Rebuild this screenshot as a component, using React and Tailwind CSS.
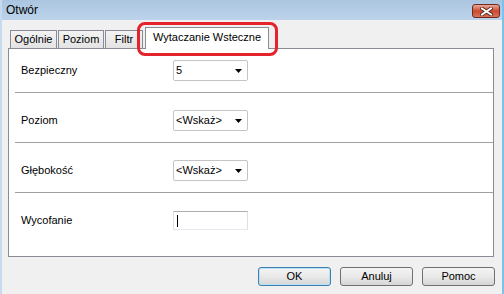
import React from 'react'

const font = { fontFamily: '"Liberation Sans", Arial, sans-serif' }

function CloseButton() {
  return (
    <div className="mt-[4px] mr-[2px] w-[28px] h-[14px] rounded-[3px] border border-[#6e2a1e] bg-gradient-to-b from-[#eaa899] via-[#c9492e] to-[#d8735a] flex items-center justify-center">
      <svg width="13" height="9" viewBox="0 0 13 9">
        <path d="M2 1.5 L11 7.5 M11 1.5 L2 7.5" stroke="#4a1a12" strokeWidth="3.6" strokeLinecap="square" />
        <path d="M2 1.5 L11 7.5 M11 1.5 L2 7.5" stroke="#ffffff" strokeWidth="2" strokeLinecap="square" />
      </svg>
    </div>
  )
}

function Tab({ label, width }) {
  return (
    <div
      className={`${width} h-[18px] mr-px border border-b-0 border-[#898c95] bg-gradient-to-b from-[#f3f3f3] to-[#e3e3e3] flex items-center justify-center text-[11px] text-black`}
    >
      {label}
    </div>
  )
}

function Dropdown({ value }) {
  return (
    <div className="w-[75px] h-[21px] border border-[#c4c4c4] rounded-[2px] bg-white flex items-center justify-between pl-[2px] pr-[5px] text-[11px] text-black">
      <span>{value}</span>
      <svg width="7" height="4" viewBox="0 0 7 4">
        <path d="M0 0 H7 L3.5 4 Z" fill="#000" />
      </svg>
    </div>
  )
}

function Row({ label, children, pt }) {
  return (
    <div className={`flex items-center pl-[12px] ${pt} pb-[11px]`}>
      <div className="w-[152px] text-[11px] text-black">{label}</div>
      {children}
    </div>
  )
}

function Separator() {
  return <div className="ml-[6px] h-px bg-[#a0a0a0]" />
}

function Button({ label, primary }) {
  return (
    <div
      className={`w-[73px] h-[19px] rounded-[3px] border flex items-center justify-center text-[11px] text-black bg-gradient-to-b from-[#f4f4f4] via-[#e9e9e9] to-[#d6d6d6] ${
        primary ? 'border-[#3c7fb1] shadow-[inset_0_0_0_1px_#b9e2f8]' : 'border-[#707070]'
      }`}
    >
      {label}
    </div>
  )
}

export default function App() {
  return (
    <div
      className="relative w-[504px] h-[294px] flex flex-col bg-[#f0f0f0] border-l-2 border-l-[#c7dbef] border-r-2 border-r-[#7cc2ec] overflow-hidden"
      style={font}
    >
      {/* Title bar */}
      <div className="h-[20px] flex justify-between bg-gradient-to-b from-[#abc5e0] to-[#bcd3ea]">
        <span className="pl-[4px] pt-[3px] text-[12px] leading-[14px] text-black">Otwór</span>
        <CloseButton />
      </div>

      {/* Tabs */}
      <div className="mt-[8px] ml-[8px] h-[20px] flex items-end relative z-10">
        <Tab label="Ogólnie" width="w-[47px]" />
        <Tab label="Poziom" width="w-[46px]" />
        <Tab label="Filtr" width="w-[38px]" />
        <div className="ml-[1px] w-[124px] h-[22px] -mb-px border border-b-0 border-[#898c95] bg-white flex items-center pl-[7px] pb-[2px] text-[11px] text-black">
          Wytaczanie Wsteczne
        </div>
      </div>

      {/* Panel */}
      <div className="ml-[6px] w-[486px] h-[209px] border border-[#898c95] bg-white flex flex-col">
        <Row label="Bezpieczny" pt="pt-[11px]">
          <Dropdown value="5" />
        </Row>
        <Separator />
        <Row label="Poziom" pt="pt-[17px]">
          <Dropdown value="<Wskaż>" />
        </Row>
        <Separator />
        <Row label="Głębokość" pt="pt-[17px]">
          <Dropdown value="<Wskaż>" />
        </Row>
        <Separator />
        <Row label="Wycofanie" pt="pt-[18px]">
          <div className="w-[75px] h-[19px] border border-[#abadb3] border-b-[#e3e9ef] border-x-[#dbdfe6] bg-white flex items-center pl-[3px]">
            <div className="w-px h-[12px] bg-black" />
          </div>
        </Row>
      </div>

      {/* Buttons */}
      <div className="mt-[10px] pr-[7px] flex justify-end gap-[9px]">
        <Button label="OK" primary />
        <Button label="Anuluj" />
        <Button label="Pomoc" />
      </div>

      {/* Red annotation around the active tab */}
      <div className="absolute left-[135px] top-[22px] w-[141px] h-[34px] border-[3px] border-[#e4232c] rounded-[8px] z-20 pointer-events-none" />
    </div>
  )
}
